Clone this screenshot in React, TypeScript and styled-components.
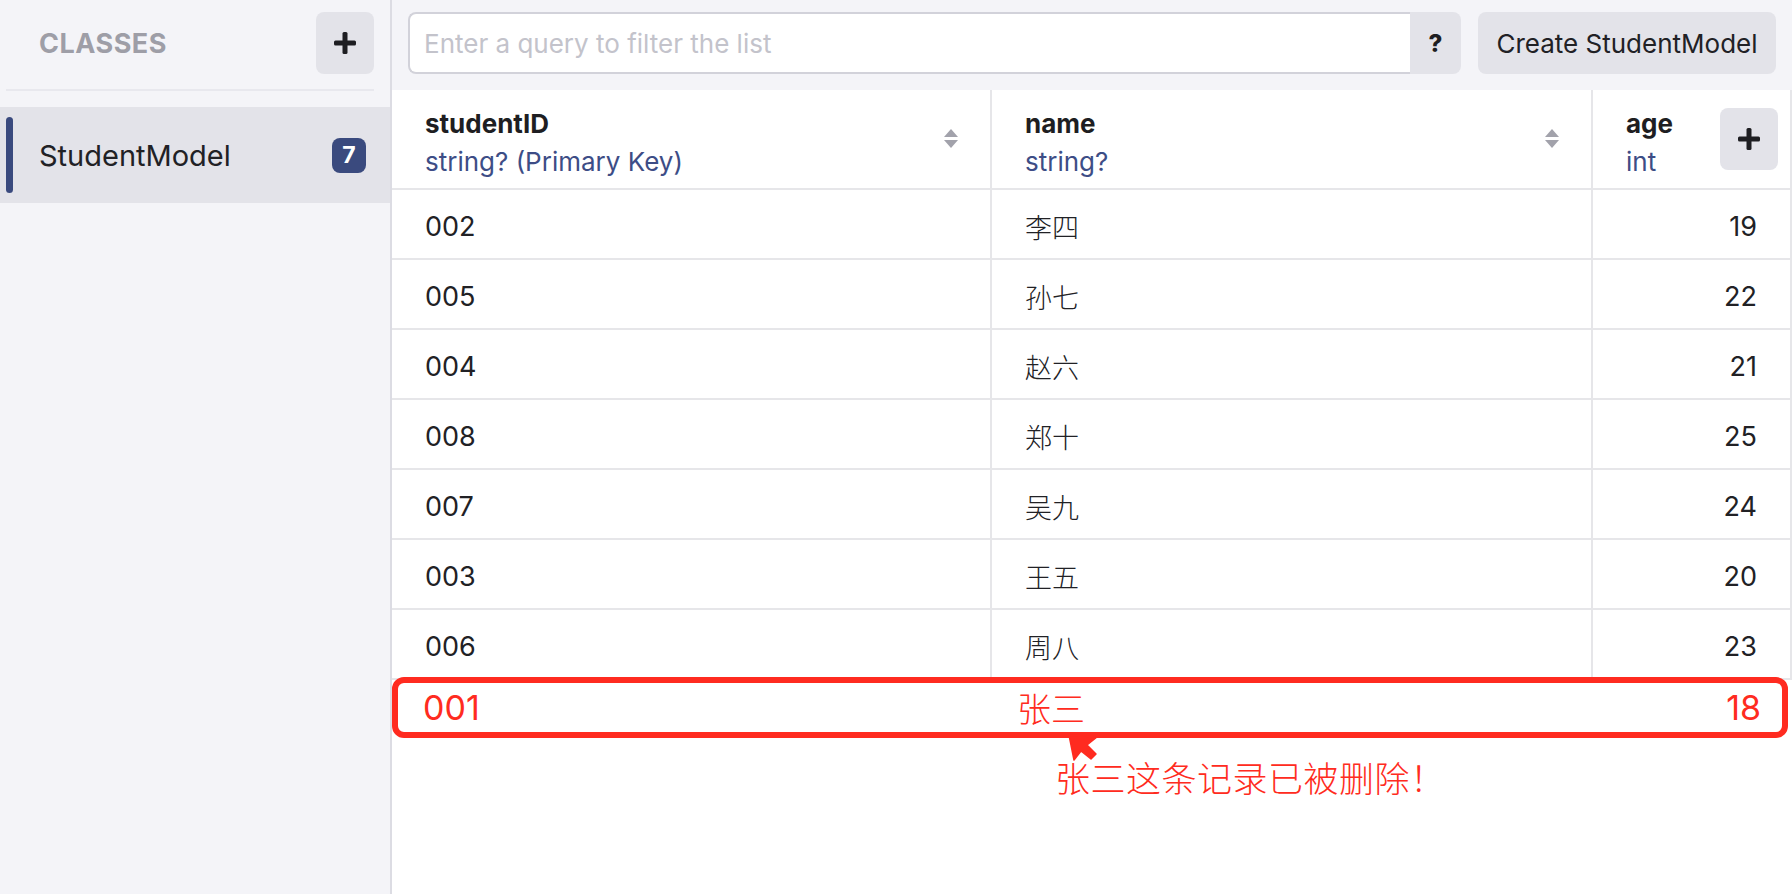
import React from "react";
import styled, { createGlobalStyle } from "styled-components";

const GlobalStyle = createGlobalStyle`
  html, body { margin: 0; padding: 0; background: #ffffff; }
  body {
    font-family: Inter, "Noto Sans CJK SC", "Liberation Sans", sans-serif;
    color: #212125;
  }
  * { box-sizing: border-box; }
`;

const Page = styled.div`
  display: grid;
  grid-template-columns: 392px 1fr;
  height: 894px;
  overflow: hidden;
`;

const Sidebar = styled.aside`
  background: #f4f4f8;
  border-right: 2px solid #dcdce3;
  display: flex;
  flex-direction: column;
`;

const SidebarHeader = styled.div`
  height: 91px;
  margin: 0 16px 0 6px;
  padding: 12px 0 15px 33px;
  border-bottom: 2px solid #e8e8ee;
  display: flex;
  align-items: center;
  justify-content: space-between;
`;

const SectionTitle = styled.div`
  font-size: 27px;
  font-weight: 700;
  letter-spacing: 0.5px;
  color: #9e9ea7;
`;

const IconButton = styled.button<{ $w?: number }>`
  width: ${(p) => p.$w ?? 58}px;
  height: 62px;
  border: none;
  border-radius: 8px;
  background: #e3e3e9;
  display: flex;
  align-items: center;
  justify-content: center;
  padding: 0;
  color: #1e1e22;
  flex-shrink: 0;
`;

const ClassList = styled.div`
  padding-top: 16px;
`;

const ClassItem = styled.div<{ $active?: boolean }>`
  position: relative;
  height: 96px;
  padding: 0 24px 0 39px;
  display: flex;
  align-items: center;
  justify-content: space-between;
  background: ${(p) => (p.$active ? "#e3e3e9" : "transparent")};
  &::before {
    content: "";
    display: ${(p) => (p.$active ? "block" : "none")};
    position: absolute;
    left: 6px;
    top: 10px;
    bottom: 10px;
    width: 7px;
    border-radius: 4px;
    background: #3a4a7e;
  }
`;

const ClassName = styled.span`
  font-size: 29px;
  color: #212125;
`;

const Badge = styled.span`
  min-width: 34px;
  height: 35px;
  border-radius: 8px;
  background: #3a4a7e;
  color: #ffffff;
  font-size: 23px;
  font-weight: 700;
  display: flex;
  align-items: center;
  justify-content: center;
`;

const Main = styled.main`
  display: flex;
  flex-direction: column;
  background: #ffffff;
`;

const TopBar = styled.div`
  height: 90px;
  background: #f4f4f8;
  padding: 12px 16px 16px 16px;
  display: flex;
  gap: 17px;
`;

const SearchGroup = styled.div`
  flex: 1;
  display: flex;
`;

const SearchInput = styled.input`
  flex: 1;
  height: 62px;
  border: 2px solid #d2d2da;
  border-right: none;
  border-radius: 8px 0 0 8px;
  padding: 0 14px;
  font-family: Inter, "Liberation Sans", sans-serif;
  font-size: 26px;
  color: #212125;
  background: #ffffff;
  outline: none;
  &::placeholder { color: #c3c3cb; }
`;

const HelpButton = styled.button`
  width: 51px;
  height: 62px;
  border: none;
  border-radius: 0 8px 8px 0;
  background: #e3e3e9;
  font-family: Inter, "Liberation Sans", sans-serif;
  font-size: 24px;
  font-weight: 800;
  color: #1e1e22;
  padding: 0;
`;

const CreateButton = styled.button`
  width: 298px;
  height: 62px;
  border: none;
  border-radius: 8px;
  background: #e3e3e9;
  font-family: Inter, "Liberation Sans", sans-serif;
  font-size: 26px;
  color: #212125;
  padding: 0;
`;

const Table = styled.div`
  display: grid;
  grid-template-columns: 600px 601px 1fr;
`;

const HeaderCell = styled.div<{ $last?: boolean }>`
  height: 100px;
  border-right: 2px solid #e6e6e9;
  border-bottom: 2px solid #e6e6e9;
  padding: 0 ${(p) => (p.$last ? 12 : 32)}px 0 33px;
  display: flex;
  align-items: center;
  justify-content: space-between;
`;

const HeaderTitle = styled.div`
  margin-top: 8px;
  display: flex;
  flex-direction: column;
`;

const ColumnName = styled.span`
  font-size: 26px;
  line-height: 38px;
  font-weight: 700;
  color: #1e1e22;
`;

const ColumnType = styled.span`
  font-size: 26px;
  line-height: 38px;
  color: #3d4d86;
`;

const Cell = styled.div<{ $align?: "left" | "right"; $cjk?: boolean }>`
  height: 70px;
  border-right: 2px solid #e6e6e9;
  border-bottom: 2px solid #e6e6e9;
  padding: 4px ${(p) => (p.$align === "right" ? 33 : 20)}px 0 33px;
  display: flex;
  align-items: center;
  justify-content: ${(p) => (p.$align === "right" ? "flex-end" : "flex-start")};
  font-size: 27px;
  font-weight: ${(p) => (p.$cjk ? 300 : 400)};
  color: #212125;
`;

const DeletedRow = styled.div`
  margin-top: -3px;
  margin-right: 4px;
  height: 61px;
  border: 6px solid #ff2b20;
  border-radius: 12px;
  display: grid;
  grid-template-columns: 594px 601px 1fr;
  align-items: center;
  color: #ff2b20;
  font-size: 34px;
  position: relative;
  z-index: 1;
`;

const DeletedCell = styled.span<{ $align?: "left" | "right"; $cjk?: boolean }>`
  padding: 0 ${(p) => (p.$align === "right" ? 21 : 0)}px 0 ${(p) => (p.$align === "right" ? 0 : 25)}px;
  text-align: ${(p) => p.$align ?? "left"};
  font-weight: ${(p) => (p.$cjk ? 300 : 400)};
`;

const Annotation = styled.div`
  position: relative;
  padding: 17px 0 0 663px;
`;

const AnnotationText = styled.div`
  font-family: "Noto Sans CJK SC", sans-serif;
  font-weight: 300;
  font-size: 35px;
  line-height: 43px;
  color: #ff2b20;
  letter-spacing: 0.5px;
`;

const Pointer = styled.svg`
  position: absolute;
  left: 668px;
  top: -10px;
  z-index: 2;
`;

const PlusIcon = ({ size = 22 }: { size?: number }) => (
  <svg width={size} height={size} viewBox="0 0 22 22">
    <rect x="8.5" y="0" width="5" height="22" rx="1.5" fill="#1e1e22" />
    <rect x="0" y="8.5" width="22" height="5" rx="1.5" fill="#1e1e22" />
  </svg>
);

const SortIcon = () => (
  <svg width="14" height="20" viewBox="0 0 14 20">
    <path d="M7 0 L14 8 L0 8 Z" fill="#a2a2ab" />
    <path d="M0 11 L14 11 L7 19 Z" fill="#a2a2ab" />
  </svg>
);

const rows: [string, string, string][] = [
  ["002", "李四", "19"],
  ["005", "孙七", "22"],
  ["004", "赵六", "21"],
  ["008", "郑十", "25"],
  ["007", "吴九", "24"],
  ["003", "王五", "20"],
  ["006", "周八", "23"],
];

export default function App() {
  return (
    <>
      <GlobalStyle />
      <Page>
        <Sidebar>
          <SidebarHeader>
            <SectionTitle>CLASSES</SectionTitle>
            <IconButton>
              <PlusIcon />
            </IconButton>
          </SidebarHeader>
          <ClassList>
            <ClassItem $active>
              <ClassName>StudentModel</ClassName>
              <Badge>7</Badge>
            </ClassItem>
          </ClassList>
        </Sidebar>
        <Main>
          <TopBar>
            <SearchGroup>
              <SearchInput placeholder="Enter a query to filter the list" />
              <HelpButton>?</HelpButton>
            </SearchGroup>
            <CreateButton>Create StudentModel</CreateButton>
          </TopBar>
          <Table>
            <HeaderCell>
              <HeaderTitle>
                <ColumnName>studentID</ColumnName>
                <ColumnType>string? (Primary Key)</ColumnType>
              </HeaderTitle>
              <SortIcon />
            </HeaderCell>
            <HeaderCell>
              <HeaderTitle>
                <ColumnName>name</ColumnName>
                <ColumnType>string?</ColumnType>
              </HeaderTitle>
              <SortIcon />
            </HeaderCell>
            <HeaderCell $last>
              <HeaderTitle>
                <ColumnName>age</ColumnName>
                <ColumnType>int</ColumnType>
              </HeaderTitle>
              <IconButton>
                <PlusIcon />
              </IconButton>
            </HeaderCell>
            {rows.map(([id, name, age]) => (
              <React.Fragment key={id}>
                <Cell>{id}</Cell>
                <Cell $cjk>{name}</Cell>
                <Cell $align="right">{age}</Cell>
              </React.Fragment>
            ))}
          </Table>
          <DeletedRow>
            <DeletedCell>001</DeletedCell>
            <DeletedCell $cjk>张三</DeletedCell>
            <DeletedCell $align="right">18</DeletedCell>
          </DeletedRow>
          <Annotation>
            <Pointer width="45" height="40" viewBox="0 0 45 40">
              <polygon
                points="9,7 14,32 21,23 31,31 36,26 27,17 37,9"
                fill="#ff2b20"
                stroke="#ff2b20"
                strokeWidth="1.5"
                strokeLinejoin="round"
              />
            </Pointer>
            <AnnotationText>张三这条记录已被删除！</AnnotationText>
          </Annotation>
        </Main>
      </Page>
    </>
  );
}
